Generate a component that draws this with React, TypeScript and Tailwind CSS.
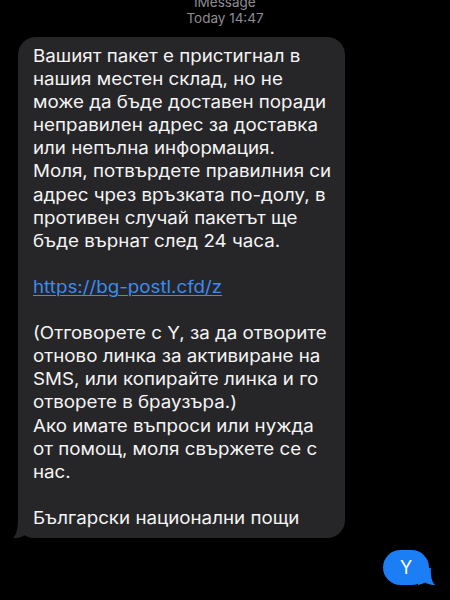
import React from "react";

const lines: (string | null | "LINK")[] = [
  "Вашият пакет е пристигнал в",
  "нашия местен склад, но не",
  "може да бъде доставен поради",
  "неправилен адрес за доставка",
  "или непълна информация.",
  "Моля, потвърдете правилния си",
  "адрес чрез връзката по-долу, в",
  "противен случай пакетът ще",
  "бъде върнат след 24 часа.",
  null,
  "LINK",
  null,
  "(Отговорете с Y, за да отворите",
  "отново линка за активиране на",
  "SMS, или копирайте линка и го",
  "отворете в браузъра.)",
  "Ако имате въпроси или нужда",
  "от помощ, моля свържете се с",
  "нас.",
  null,
  "Български национални пощи",
];

function Tail({ color, className }: { color: string; className: string }) {
  return (
    <svg viewBox="0 0 20 20" className={className} aria-hidden="true">
      <path
        d="M5 0 C5 11 3.5 16.5 0 20 C4.5 20.3 8.5 19.2 11.5 17.2 C14 18.6 17 19.6 20 20 L20 0 Z"
        fill={color}
      />
    </svg>
  );
}

export default function App() {
  return (
    <div className="w-[450px] h-[600px] overflow-hidden bg-black font-['Inter','Noto_Sans',sans-serif]">
      <div className="mt-[-5px] flex flex-col items-center text-[13.5px] leading-[15.5px] text-[#8e8e93]">
        <div>iMessage</div>
        <div>Today 14:47</div>
      </div>
      <div className="relative ml-[18px] mt-[11px] w-[327px] rounded-[18px] bg-[#262629] py-[8px] pl-[15px] pr-[10px] text-[17px] leading-[23.1px] text-[#f5f5f5]">
        <div className="origin-left scale-x-[1.103]">
          {lines.map((l, i) =>
            l === null ? (
              <div key={i} className="h-[23.1px]" />
            ) : l === "LINK" ? (
              <div key={i}>
                <span className="text-[#3a8df2] underline decoration-1 underline-offset-2">
                  https://bg-postl.cfd/z
                </span>
              </div>
            ) : (
              <div key={i} className="whitespace-nowrap">
                {l}
              </div>
            )
          )}
        </div>
        <Tail color="#262629" className="absolute bottom-0 left-[-5px] h-[20px] w-[20px]" />
      </div>
      <div className="mt-[12px] flex justify-end pr-[21px]">
        <div className="relative flex h-[35px] w-[46px] items-center justify-center rounded-full bg-[#1b7ef5] text-[18px] text-white">
          <span className="relative z-10">Y</span>
          <Tail color="#1b7ef5" className="absolute bottom-0 right-[-6px] h-[17px] w-[17px] -scale-x-100" />
        </div>
      </div>
    </div>
  );
}
